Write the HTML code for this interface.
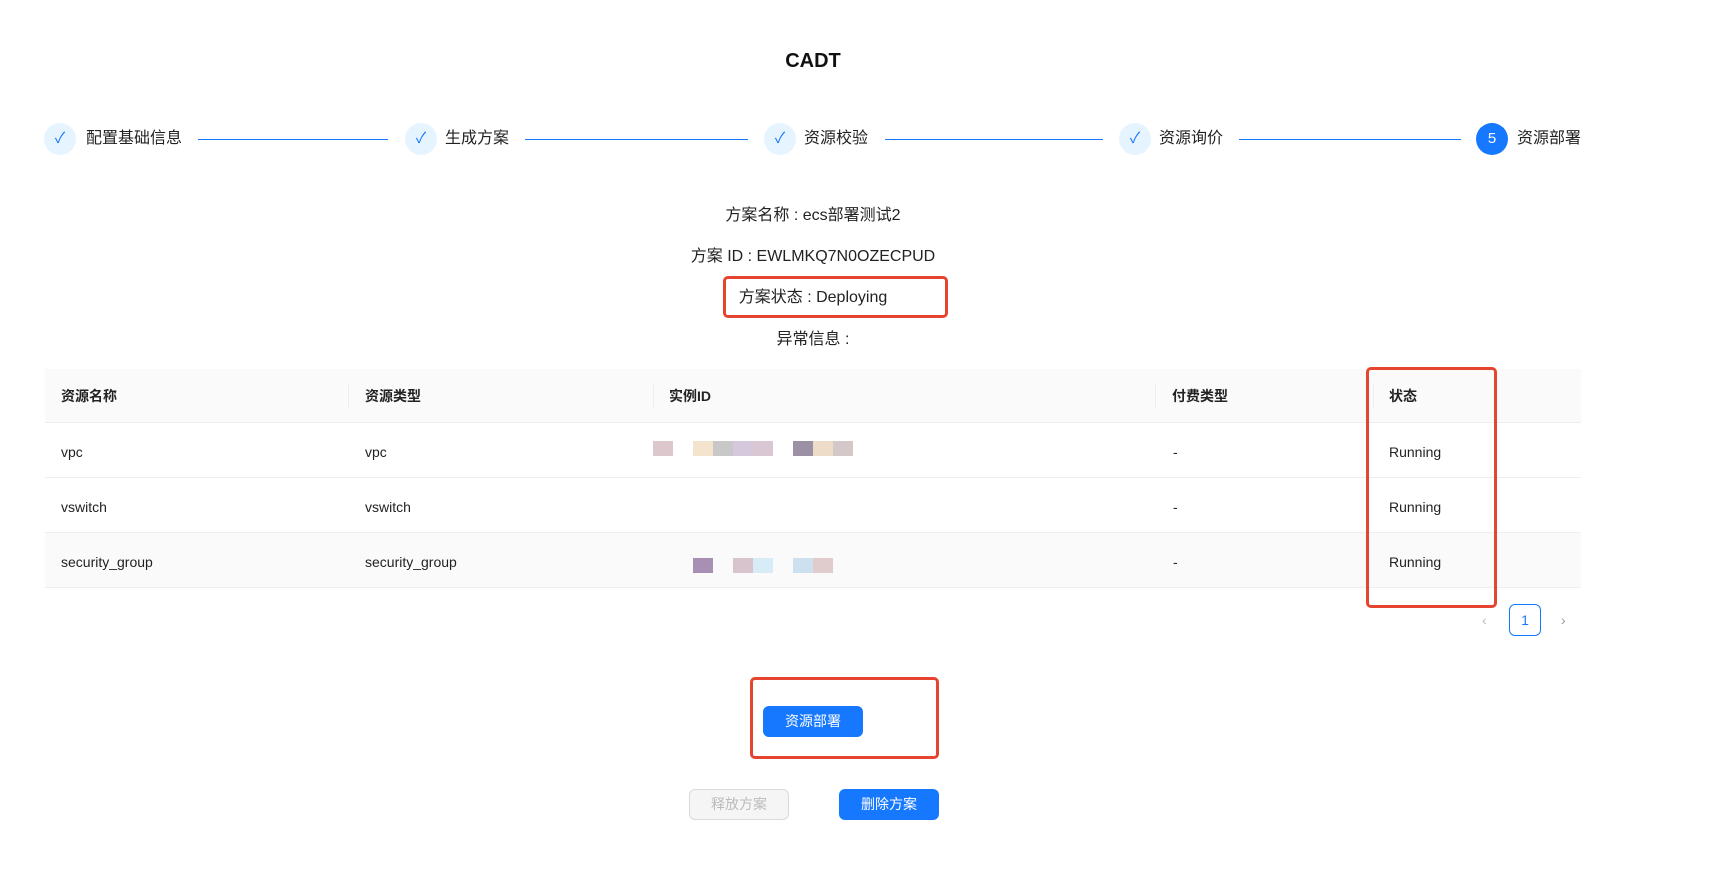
<!DOCTYPE html>
<html><head><meta charset="utf-8"><style>
*{margin:0;padding:0;box-sizing:border-box}
body{width:1736px;height:872px;background:#fff;font-family:"Liberation Sans","Noto Sans CJK SC",sans-serif;color:#222;position:relative;overflow:hidden}
.a{position:absolute}
.title{left:0;width:1626px;top:50px;text-align:center;font-weight:bold;font-size:20px;color:#111}
.circ{width:32px;height:32px;border-radius:50%;background:#e6f4ff;color:#1677ff;top:123px;text-align:center;line-height:32px;font-size:15px}
.lbl{top:128px;font-size:16px;color:#222;line-height:22px}
.line{top:139px;height:1px;background:#1677ff}
.info{left:0;width:1626px;text-align:center;font-size:16px;line-height:22px}
.red{border:3px solid #e5442f;border-radius:5px}
.th{top:369px;height:54px;background:#fafafa;left:45px;width:1536px;border-bottom:1px solid #eee}
.row{left:45px;width:1536px;height:55px;border-bottom:1px solid #eee}
.t{font-size:14px;line-height:20px}
.h{font-weight:bold;font-size:14px;top:386px;color:#222}
.sep{top:385px;width:1px;height:22px;background:#eee}
.px{width:20px;height:15px}
.btn{height:31px;border-radius:6px;text-align:center;line-height:31px;font-size:14px}
</style></head><body>
<div class="a title">CADT</div>

<div class="a circ" style="left:44px">✓</div><div class="a lbl" style="left:86px">配置基础信息</div>
<div class="a line" style="left:198px;width:190px"></div>
<div class="a circ" style="left:405px">✓</div><div class="a lbl" style="left:445px">生成方案</div>
<div class="a line" style="left:525px;width:223px"></div>
<div class="a circ" style="left:764px">✓</div><div class="a lbl" style="left:804px">资源校验</div>
<div class="a line" style="left:885px;width:218px"></div>
<div class="a circ" style="left:1119px">✓</div><div class="a lbl" style="left:1159px">资源询价</div>
<div class="a line" style="left:1239px;width:222px"></div>
<div class="a circ" style="left:1476px;background:#1677ff;color:#fff">5</div><div class="a lbl" style="left:1517px">资源部署</div>

<div class="a info" style="top:205px">方案名称 : ecs部署测试2</div>
<div class="a info" style="top:246px">方案 ID : EWLMKQ7N0OZECPUD</div>
<div class="a info" style="top:287px">方案状态 : Deploying</div>
<div class="a info" style="top:329px">异常信息 :</div>
<div class="a red" style="left:723px;top:276px;width:225px;height:42px"></div>

<div class="a th"></div>
<div class="a row" style="top:423px"></div>
<div class="a row" style="top:478px"></div>
<div class="a row" style="top:533px;background:#fafafa"></div>
<div class="a sep" style="left:348px"></div><div class="a sep" style="left:653px"></div><div class="a sep" style="left:1155px"></div><div class="a sep" style="left:1373px"></div>
<div class="a h" style="left:61px">资源名称</div><div class="a h" style="left:365px">资源类型</div><div class="a h" style="left:669px">实例ID</div><div class="a h" style="left:1172px">付费类型</div><div class="a h" style="left:1389px">状态</div>

<div class="a t" style="left:61px;top:442px">vpc</div><div class="a t" style="left:365px;top:442px">vpc</div><div class="a t" style="left:1173px;top:442px">-</div><div class="a t" style="left:1389px;top:442px">Running</div>
<div class="a t" style="left:61px;top:497px">vswitch</div><div class="a t" style="left:365px;top:497px">vswitch</div><div class="a t" style="left:1173px;top:497px">-</div><div class="a t" style="left:1389px;top:497px">Running</div>
<div class="a t" style="left:61px;top:552px">security_group</div><div class="a t" style="left:365px;top:552px">security_group</div><div class="a t" style="left:1173px;top:552px">-</div><div class="a t" style="left:1389px;top:552px">Running</div>

<div class="a px" style="left:653px;top:441px;background:#dcc8cc"></div>
<div class="a px" style="left:693px;top:441px;background:#f5e4cd"></div>
<div class="a px" style="left:713px;top:441px;background:#c8c8c8"></div>
<div class="a px" style="left:733px;top:441px;background:#d6c8dc"></div>
<div class="a px" style="left:753px;top:441px;background:#d9c8d4"></div>
<div class="a px" style="left:793px;top:441px;background:#9c90a4"></div>
<div class="a px" style="left:813px;top:441px;background:#ecdcc8"></div>
<div class="a px" style="left:833px;top:441px;background:#d4c8c8"></div>

<div class="a px" style="left:693px;top:558px;background:#a890b4"></div>
<div class="a px" style="left:733px;top:558px;background:#d8c4cc"></div>
<div class="a px" style="left:753px;top:558px;background:#d8ecf8"></div>
<div class="a px" style="left:793px;top:558px;background:#cce0f0"></div>
<div class="a px" style="left:813px;top:558px;background:#e0cccc"></div>

<div class="a red" style="left:1366px;top:367px;width:131px;height:241px"></div>

<div class="a" style="left:1482px;top:612px;color:#bbb;font-size:14px">‹</div>
<div class="a" style="left:1509px;top:604px;width:32px;height:32px;border:1px solid #1677ff;border-radius:6px;color:#1677ff;text-align:center;line-height:30px;font-size:14px">1</div>
<div class="a" style="left:1561px;top:612px;color:#999;font-size:14px">›</div>

<div class="a red" style="left:750px;top:677px;width:189px;height:82px"></div>
<div class="a btn" style="left:763px;top:706px;width:100px;background:#1677ff;color:#fff">资源部署</div>

<div class="a btn" style="left:689px;top:789px;width:100px;background:#f5f5f5;border:1px solid #d9d9d9;color:#bbb;line-height:29px">释放方案</div>
<div class="a btn" style="left:839px;top:789px;width:100px;background:#1677ff;color:#fff">删除方案</div>
</body></html>
